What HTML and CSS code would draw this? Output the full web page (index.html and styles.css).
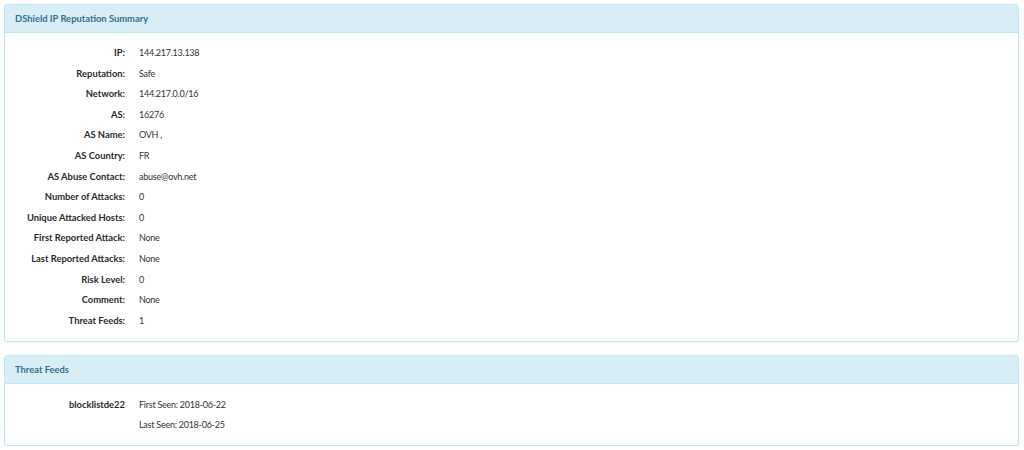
FILE: index.html
```html
<!DOCTYPE html>
<html>
<head>
<meta charset="utf-8">
<link rel="stylesheet" href="styles.css">
</head>
<body>
<div class="panel panel-summary">
  <div class="panel-heading">DShield IP Reputation Summary</div>
  <div class="panel-body">
    <dl class="dl-horizontal">
      <dt>IP:</dt><dd>144.217.13.138</dd>
      <dt>Reputation:</dt><dd>Safe</dd>
      <dt>Network:</dt><dd>144.217.0.0/16</dd>
      <dt>AS:</dt><dd>16276</dd>
      <dt>AS Name:</dt><dd>OVH ,</dd>
      <dt>AS Country:</dt><dd>FR</dd>
      <dt>AS Abuse Contact:</dt><dd>abuse@ovh.net</dd>
      <dt>Number of Attacks:</dt><dd>0</dd>
      <dt>Unique Attacked Hosts:</dt><dd>0</dd>
      <dt>First Reported Attack:</dt><dd>None</dd>
      <dt>Last Reported Attacks:</dt><dd>None</dd>
      <dt>Risk Level:</dt><dd>0</dd>
      <dt>Comment:</dt><dd>None</dd>
      <dt>Threat Feeds:</dt><dd>1</dd>
    </dl>
  </div>
</div>
<div class="panel panel-feeds">
  <div class="panel-heading">Threat Feeds</div>
  <div class="panel-body">
    <dl class="dl-horizontal feeds">
      <dt>blocklistde22</dt><dd>First Seen: 2018-06-22</dd>
      <dt></dt><dd>Last Seen: 2018-06-25</dd>
    </dl>
  </div>
</div>
</body>
</html>
```
FILE: styles.css
```css
html, body {
  margin: 0;
  padding: 0;
  background: #fff;
}
body {
  padding: 4px 5px 0 4px;
  font-family: Lato, "Open Sans", sans-serif;
  font-size: 9.4px;
  color: #333;
}
.panel {
  border: 1px solid #bce8f1;
  border-radius: 3px;
  background: #fff;
  box-shadow: 0 1px 1px rgba(0,0,0,0.05);
}
.panel-summary {
  margin-bottom: 13px;
}
.panel-heading {
  background: #d9edf7;
  border-bottom: 1px solid #bce8f1;
  color: #31708f;
  font-weight: bold;
  height: 27px;
  line-height: 27px;
  padding: 0 10px;
  border-radius: 2px 2px 0 0;
}
.panel-body {
  padding: 10px 0 10px;
}
.dl-horizontal {
  display: grid;
  grid-template-columns: 120px 1fr;
  column-gap: 14px;
  margin: 0;
}
.dl-horizontal dt {
  font-weight: bold;
  text-align: right;
  line-height: 20.6px;
  white-space: nowrap;
  color: #2a2a2a;
}
.dl-horizontal dd {
  margin: 0;
  line-height: 20.6px;
  font-size: 9px;
  letter-spacing: -0.25px;
}
.feeds dt, .feeds dd {
  line-height: 20px;
}
.panel-feeds .panel-body {
  padding: 11px 0 10px;
}
```
